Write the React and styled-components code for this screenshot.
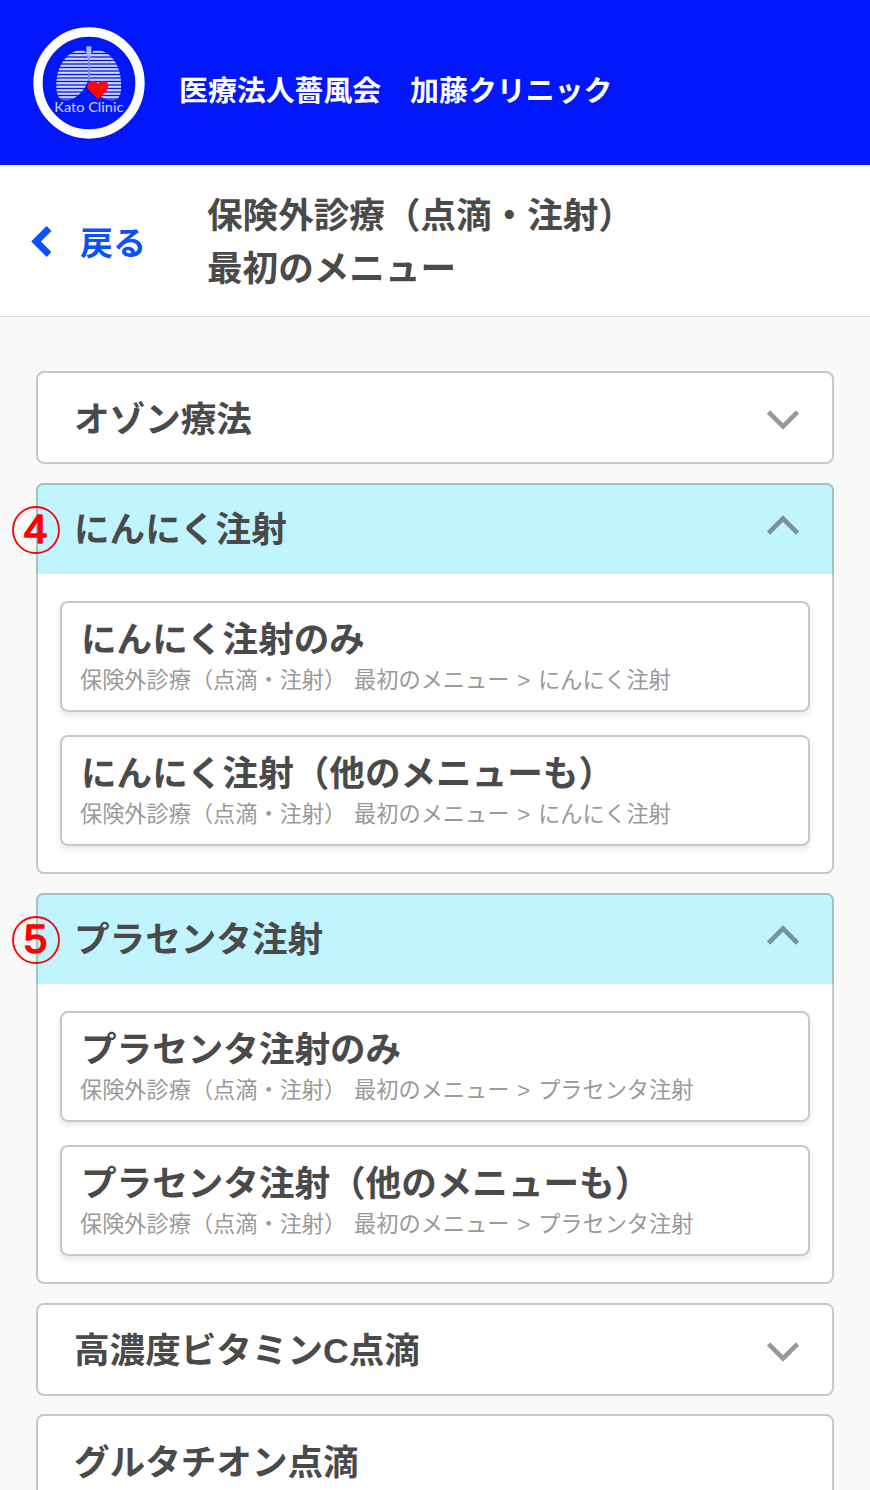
import { useState } from "react"
import styled, { createGlobalStyle } from "styled-components"

const crumb = `保険外診療（点滴・注射） 最初のメニュー`

const menus = [{
    name: `オゾン療法`,
    items: []
},{
    name: `にんにく注射`,
    badge: `4`,
    items: [`にんにく注射のみ`, `にんにく注射（他のメニューも）`]
},{
    name: `プラセンタ注射`,
    badge: `5`,
    items: [`プラセンタ注射のみ`, `プラセンタ注射（他のメニューも）`]
},{
    name: `高濃度ビタミンC点滴`,
    items: []
},{
    name: `グルタチオン点滴`,
    noChevron: true,
    items: []
}]

export default function App(){
    const [opened, setOpened] = useState([1, 2])

    function toggle(idx){
        setOpened(opened.includes(idx) ? opened.filter(i => i !== idx) : [...opened, idx])
    }

    return(
        <>
            <GlobalStyle/>
            <Page>
                <Header>
                    <Logo/>
                    <h1>医療法人薔風会　加藤クリニック</h1>
                </Header>
                <TitleBar>
                    <Back>
                        <svg width="21" height="31" viewBox="0 0 21 31">
                            <path d="M18 2.5L5 15.5L18 28.5" fill="none" stroke="#0a50ff" strokeWidth="6.8"/>
                        </svg>
                        <span>戻る</span>
                    </Back>
                    <h2>保険外診療（点滴・注射）<br/>最初のメニュー</h2>
                </TitleBar>
                <MenuList>
                    {menus.map((menu, idx)=>
                    <Menu
                        key={idx}
                        menu={menu}
                        open={opened.includes(idx)}
                        onToggle={() => toggle(idx)}
                    />)}
                </MenuList>
            </Page>
        </>
    )
}

function Menu({menu, open, onToggle}){
    const isOpen = open && menu.items.length > 0
    return(
        <Card>
            <CardHead $open={isOpen} onClick={onToggle}>
                {menu.badge && <NumberBadge number={menu.badge}/>}
                <span>{menu.name}</span>
                {!menu.noChevron &&
                <Chevron $open={isOpen} width="32" height="20" viewBox="0 0 32 20">
                    <path d="M1.5 2L16 16.5L30.5 2" fill="none" strokeWidth="4.6"/>
                </Chevron>}
            </CardHead>
            {isOpen &&
            <CardBody>
                {menu.items.map(item =>
                <Item key={item}>
                    <h3>{item}</h3>
                    <p>{crumb} &gt; {menu.name}</p>
                </Item>)}
            </CardBody>}
        </Card>
    )
}

function NumberBadge({number}){
    return(
        <Badge width="48" height="48" viewBox="0 0 48 48">
            <circle cx="24" cy="24" r="23" fill="none" strokeWidth="1.8"/>
            <text x="23" y="37.5" textAnchor="middle" transform="scale(1.03 1)" strokeWidth="1.6" strokeLinejoin="round">{number}</text>
        </Badge>
    )
}

function Logo(){
    const stripes = []
    for(let y = 106; y < 256; y += 10.5){
        stripes.push(y)
    }
    return(
        <svg width="112" height="112" viewBox="40 35 336 336">
            <defs>
                <clipPath id="lungs">
                    <path d="M194 106C175 102 152 110 135 132C116 155 109 185 110 215C111 240 118 254 135 255C165 257 200 225 206 190V122Z"/>
                    <path d="M222 106C241 102 264 110 281 132C299 155 305 185 305 215C304 240 297 254 280 255C250 257 216 225 210 190V122Z"/>
                </clipPath>
            </defs>
            <circle cx="208" cy="203" r="153" fill="#0217f5" stroke="#fff" strokeWidth="28"/>
            <g clipPath="url(#lungs)">
                {stripes.map(y => <rect key={y} x="105" y={y} width="205" height="6.5" fill="#d3d8ff"/>)}
            </g>
            <path d="M200 93H215V120L210 128V198H206V128L200 120Z" fill="#a9b2fa"/>
            <path d="M236 252C225 238 204 228 204 212C204 196 226 192 235 205C244 192 266 196 266 212C266 228 246 238 236 252Z" fill="#ff0505"/>
            <text x="104" y="289" textLength="207" lengthAdjust="spacingAndGlyphs" fontFamily="Lato, sans-serif" fontSize="40" fontWeight="400" fill="#d3d8ff">Kato Clinic</text>
        </svg>
    )
}


const GlobalStyle = createGlobalStyle`
    *{
        box-sizing: border-box;
    }
    body{
        margin: 0;
        background: #f9f9f9;
        font-family: "Liberation Sans", "Noto Sans CJK JP", sans-serif;
        color: #4a4a4a;
    }
    h1, h2, h3, p{
        margin: 0;
    }
`

const Page = styled.div`
    width: 870px;
    height: 1490px;
    overflow: hidden;
`

const Header = styled.header`
    height: 165px;
    padding-left: 33px;
    display: flex;
    align-items: center;
    background: #0217fa;

    h1{
        margin: 10px 0 0 34px;
        font-family: "Noto Sans CJK JP", sans-serif;
        font-size: 28.9px;
        line-height: 40px;
        font-weight: 700;
        color: #ffffff;
    }
`

const TitleBar = styled.div`
    height: 152px;
    display: flex;
    align-items: center;
    background: #ffffff;
    border-bottom: 1px solid #dcdcdc;

    h2{
        margin-top: -3px;
        font-family: "Noto Sans CJK JP", sans-serif;
        font-size: 35.6px;
        line-height: 53px;
        font-weight: 700;
    }
`

const Back = styled.div`
    width: 207px;
    padding-left: 31px;
    display: flex;
    align-items: center;
    gap: 28px;
    font-family: "Noto Sans CJK JP", sans-serif;
    font-size: 33px;
    line-height: 48px;
    font-weight: 700;
    color: #0a50ff;

    svg{
        margin-top: 2px;
    }
`

const MenuList = styled.main`
    padding: 54px 36px 0;
    display: flex;
    flex-direction: column;
    gap: 18.5px;
`

const Card = styled.section`
    background: #ffffff;
    border-radius: 8px;
    box-shadow: inset 0 0 0 2px #c8c8c8;
`

const CardHead = styled.div`
    position: relative;
    height: ${props => props.$open ? `91px` : `93px`};
    padding: 0 35px 0 38px;
    display: flex;
    align-items: center;
    justify-content: space-between;
    font-size: 35.6px;
    line-height: 52px;
    font-weight: 700;
    border-radius: ${props => props.$open ? `8px 8px 0 0` : `8px`};
    background: ${props => props.$open ? `#c0f5ff` : `transparent`};
    box-shadow: ${props => props.$open ? `inset 2px 0 #9fc3c9, inset -2px 0 #9fc3c9, inset 0 2px #9fc3c9` : `none`};

    span{
        padding-top: 4px;
    }
`

const Badge = styled.svg`
    position: absolute;
    left: -24px;
    top: 23.2px;
    overflow: visible;
    stroke: #ff0000;

    text{
        fill: #ff0000;
        font-family: "Liberation Sans", sans-serif;
        font-size: 40.5px;
        font-weight: 400;
    }
`

const Chevron = styled.svg`
    margin-top: ${props => props.$open ? `-6px` : `5px`};
    stroke: ${props => props.$open ? `#74949a` : `#999999`};
    transform: ${props => props.$open ? `rotate(180deg)` : `none`};
`

const CardBody = styled.div`
    padding: 27.2px 24px 28px;
    display: flex;
    flex-direction: column;
    gap: 22.5px;
`

const Item = styled.div`
    height: 111.5px;
    padding: 12px 19px 0;
    border: 2px solid #c8c8c8;
    border-radius: 8px;
    box-shadow: 0 3px 6px rgba(0, 0, 0, 0.1);

    h3{
        font-size: 35.6px;
        line-height: 50px;
        font-weight: 700;
    }
    p{
        margin-left: -1px;
        font-size: 22.2px;
        line-height: 32px;
        word-spacing: 1.7px;
        color: #999999;
    }
`
